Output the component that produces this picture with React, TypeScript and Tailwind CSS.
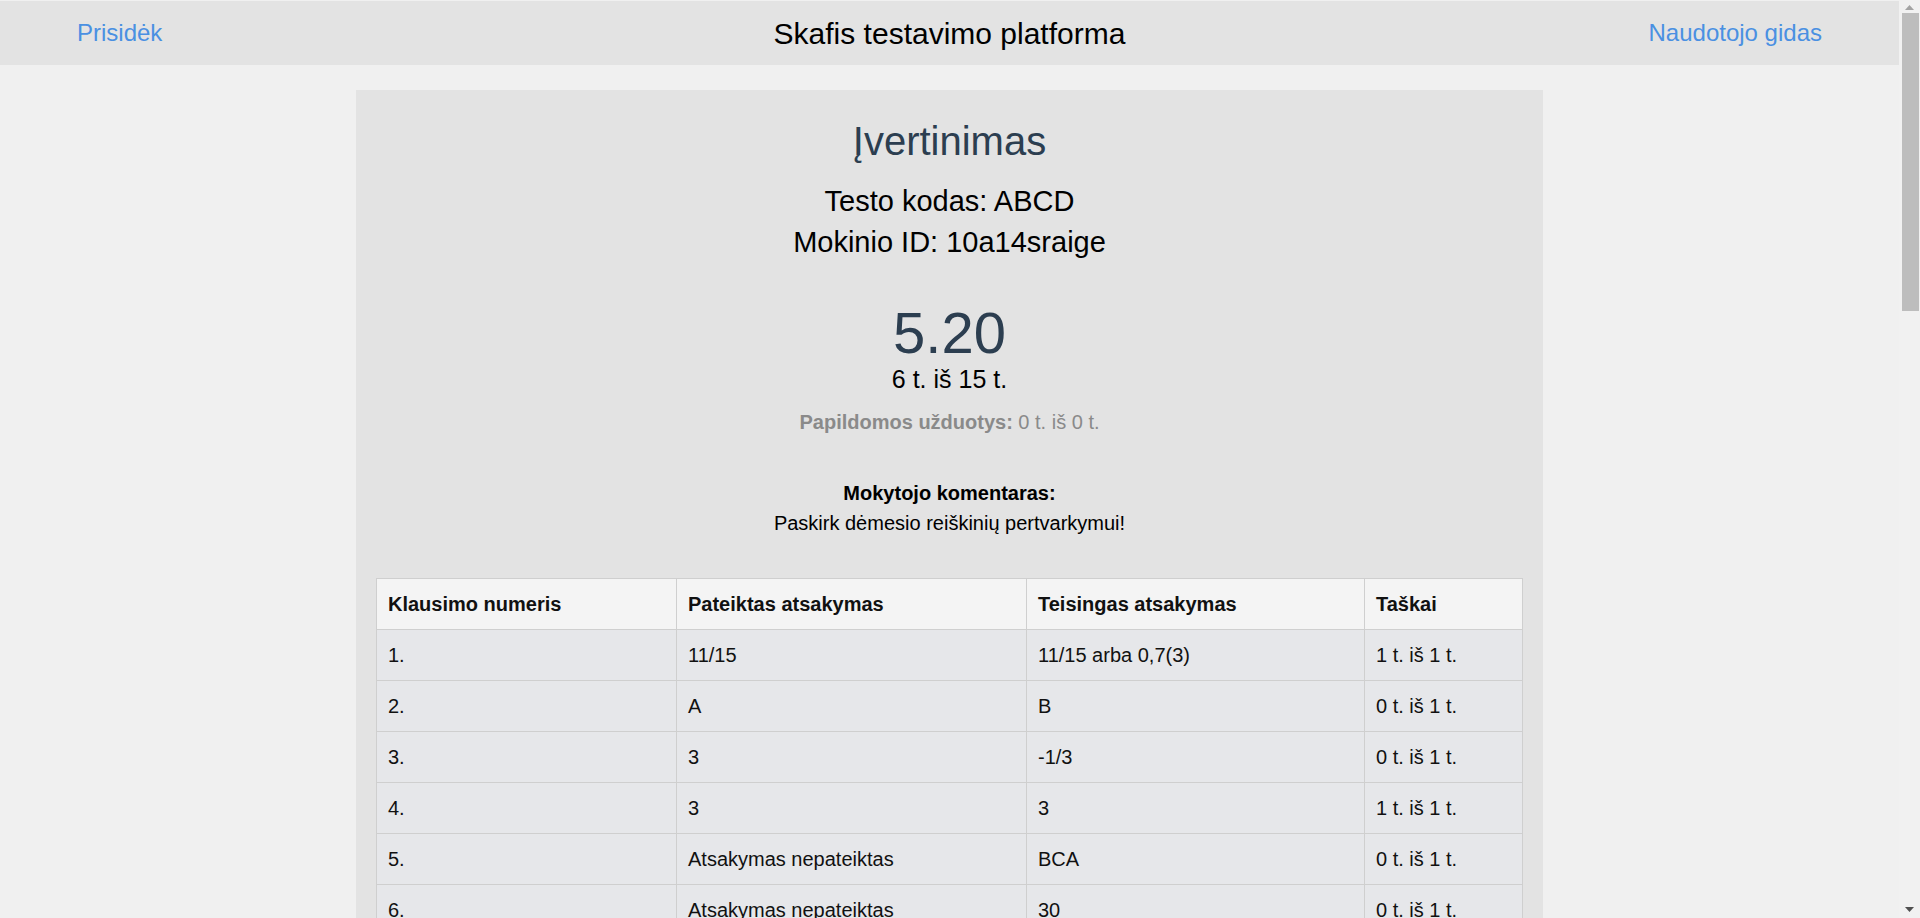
const rows = [
  { nr: '1.', given: '11/15', correct: '11/15 arba 0,7(3)', points: '1 t. iš 1 t.' },
  { nr: '2.', given: 'A', correct: 'B', points: '0 t. iš 1 t.' },
  { nr: '3.', given: '3', correct: '-1/3', points: '0 t. iš 1 t.' },
  { nr: '4.', given: '3', correct: '3', points: '1 t. iš 1 t.' },
  { nr: '5.', given: 'Atsakymas nepateiktas', correct: 'BCA', points: '0 t. iš 1 t.' },
  { nr: '6.', given: 'Atsakymas nepateiktas', correct: '30', points: '0 t. iš 1 t.' },
  { nr: '7.', given: '2', correct: '2', points: '1 t. iš 1 t.' },
  { nr: '8.', given: 'C', correct: 'D', points: '0 t. iš 1 t.' },
  { nr: '9.', given: '-5', correct: '-5', points: '1 t. iš 1 t.' },
  { nr: '10.', given: 'Atsakymas nepateiktas', correct: '12', points: '0 t. iš 1 t.' },
  { nr: '11.', given: '1/2', correct: '0,5 arba 1/2', points: '1 t. iš 1 t.' },
  { nr: '12.', given: 'B', correct: 'A', points: '0 t. iš 1 t.' },
  { nr: '13.', given: '7', correct: '7', points: '1 t. iš 1 t.' },
  { nr: '14.', given: 'Atsakymas nepateiktas', correct: 'ACB', points: '0 t. iš 1 t.' },
  { nr: '15.', given: '4', correct: '-4', points: '0 t. iš 1 t.' },
];

const cell = 'border border-[#cfcfcf] px-[11px] py-[10px] leading-[30px] text-left align-middle';

// window scrollbar as it shows in the screenshot
function ScrollBar() {
  return (
    <aside className="sticky top-0 flex h-[918px] w-[21px] shrink-0 flex-col items-center self-start bg-[#f1f1f1]">
      <svg width="9" height="5" viewBox="0 0 9 5" className="mt-[5px]">
        <path d="M0 5 L4.5 0 L9 5 Z" fill="#a3a3a3" />
      </svg>
      <div className="mt-[3px] ml-[2px] h-[298px] w-[17px] bg-[#bdbdbd]" />
      <div className="flex-1" />
      <svg width="9" height="5" viewBox="0 0 9 5" className="mb-[6px]">
        <path d="M0 0 L9 0 L4.5 5 Z" fill="#505050" />
      </svg>
    </aside>
  );
}

export default function App() {
  return (
    <div
      className="flex min-h-screen bg-[#f0f0f0] text-[#111]"
      style={{ fontFamily: '"Liberation Sans", Arial, sans-serif' }}
    >
      <div className="min-w-0 flex-1 pt-px">
        <header className="grid h-[64px] grid-cols-3 items-center bg-[#e3e3e3] px-[77px]">
          <a className="justify-self-start text-[24px] text-[#4a90e2]">Prisidėk</a>
          <div className="text-center text-[30px] text-black">Skafis testavimo platforma</div>
          <a className="justify-self-end text-[24px] text-[#4a90e2]">Naudotojo gidas</a>
        </header>

        <main className="pt-[25px] pb-[40px]">
          <section className="mx-auto w-[1187px] bg-[#e3e3e3] px-[20px] pt-[27px] pb-[40px]">
            <div className="text-center">
              <h1 className="text-[40px] leading-[48px] text-[#2c3e50]">Įvertinimas</h1>
              <div className="mt-[16px] text-[29px] leading-[41px] text-black">
                <p>Testo kodas: ABCD</p>
                <p>Mokinio ID: 10a14sraige</p>
              </div>
              <p className="mt-[38px] text-[58px] leading-[63px] text-[#2c3e50]">5.20</p>
              <p className="text-[25px] leading-[30px] text-black">6 t. iš 15 t.</p>
              <p className="mt-[16px] text-[20px] leading-[24px] text-[#8a8a8a]">
                <span className="font-bold">Papildomos užduotys:</span> 0 t. iš 0 t.
              </p>
              <div className="mt-[44px] text-[20px] leading-[30px] text-black">
                <p className="font-bold">Mokytojo komentaras:</p>
                <p>Paskirk dėmesio reiškinių pertvarkymui!</p>
              </div>
            </div>

            <table className="mt-[40px] w-full table-fixed border-collapse text-[20px] text-[#111]">
              <thead>
                <tr className="bg-[#f4f4f4]">
                  <th className={`${cell} w-[300px] font-bold`}>Klausimo numeris</th>
                  <th className={`${cell} w-[350px] font-bold`}>Pateiktas atsakymas</th>
                  <th className={`${cell} w-[338px] font-bold`}>Teisingas atsakymas</th>
                  <th className={`${cell} font-bold`}>Taškai</th>
                </tr>
              </thead>
              <tbody>
                {rows.map((row) => (
                  <tr key={row.nr} className="bg-[#e6e7ea]">
                    <td className={cell}>{row.nr}</td>
                    <td className={cell}>{row.given}</td>
                    <td className={cell}>{row.correct}</td>
                    <td className={cell}>{row.points}</td>
                  </tr>
                ))}
              </tbody>
            </table>
          </section>
        </main>
      </div>
      <ScrollBar />
    </div>
  );
}
